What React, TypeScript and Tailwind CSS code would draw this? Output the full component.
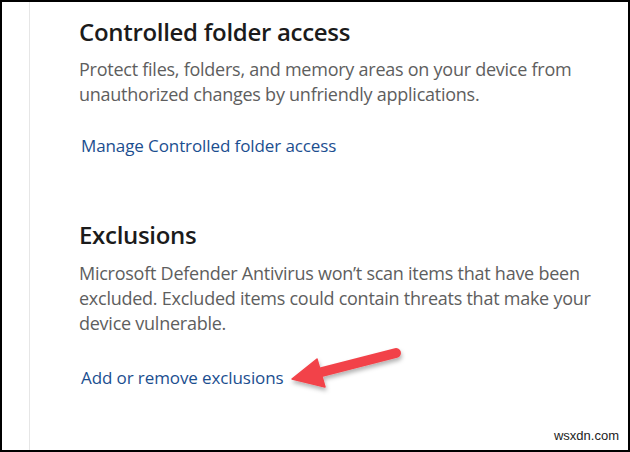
export default function App() {
  return (
    <div
      className="relative flex h-[452px] w-[630px] overflow-hidden border-2 border-black bg-white"
      style={{ fontFamily: '"Open Sans", "Noto Sans", sans-serif' }}
    >
      <div className="w-[28px] shrink-0 border-r border-[#e6e6e6]" />

      <div className="flex flex-col pl-[49px] pt-[13px]">
        <section>
          <h2 className="text-[24px] font-semibold leading-[34px] tracking-[-0.3px] text-[#1b1b1b]">
            Controlled folder access
          </h2>
          <p className="mt-[8px] text-[18px] leading-[25px] tracking-[-0.25px] text-[#5e5e5e]">
            Protect files, folders, and memory areas on your device from
            <br />
            unauthorized changes by unfriendly applications.
          </p>
          <a className="mt-[26px] block pl-[2px] text-[17px] leading-[25px] tracking-[-0.1px] text-[#1b4e8f]">
            Manage Controlled folder access
          </a>
        </section>

        <section className="mt-[60px]">
          <h2 className="text-[24px] font-semibold leading-[34px] tracking-[-0.3px] text-[#1b1b1b]">
            Exclusions
          </h2>
          <p className="mt-[9px] text-[18px] leading-[25px] tracking-[-0.25px] text-[#5e5e5e]">
            Microsoft Defender Antivirus won’t scan items that have been
            <br />
            excluded. Excluded items could contain threats that make your
            <br />
            device vulnerable.
          </p>
          <a className="mt-[29px] block pl-[2px] text-[17px] leading-[25px] tracking-[-0.1px] text-[#1b4e8f]">
            Add or remove exclusions
          </a>
        </section>
      </div>

      {/* annotation arrow */}
      <svg className="absolute left-[284px] top-[342px]" width="120" height="52" viewBox="284 342 120 52">
        <defs>
          <filter id="sh" x="-20%" y="-30%" width="140%" height="170%">
            <feDropShadow dx="1" dy="3" stdDeviation="2.2" floodColor="#000" floodOpacity="0.3" />
          </filter>
        </defs>
        <g filter="url(#sh)" fill="#f2434a" stroke="#f2434a" strokeLinejoin="round">
          <line x1="312" y1="372" x2="394" y2="351" strokeWidth="10" strokeLinecap="round" />
          <polygon points="290,377 315,357 323,385" strokeWidth="1.5" />
        </g>
      </svg>

      <span
        className="absolute bottom-[5px] right-[9px] text-[13px] text-[#222]"
        style={{ fontFamily: '"Liberation Sans", Arial, sans-serif' }}
      >
        wsxdn.com
      </span>
    </div>
  );
}
